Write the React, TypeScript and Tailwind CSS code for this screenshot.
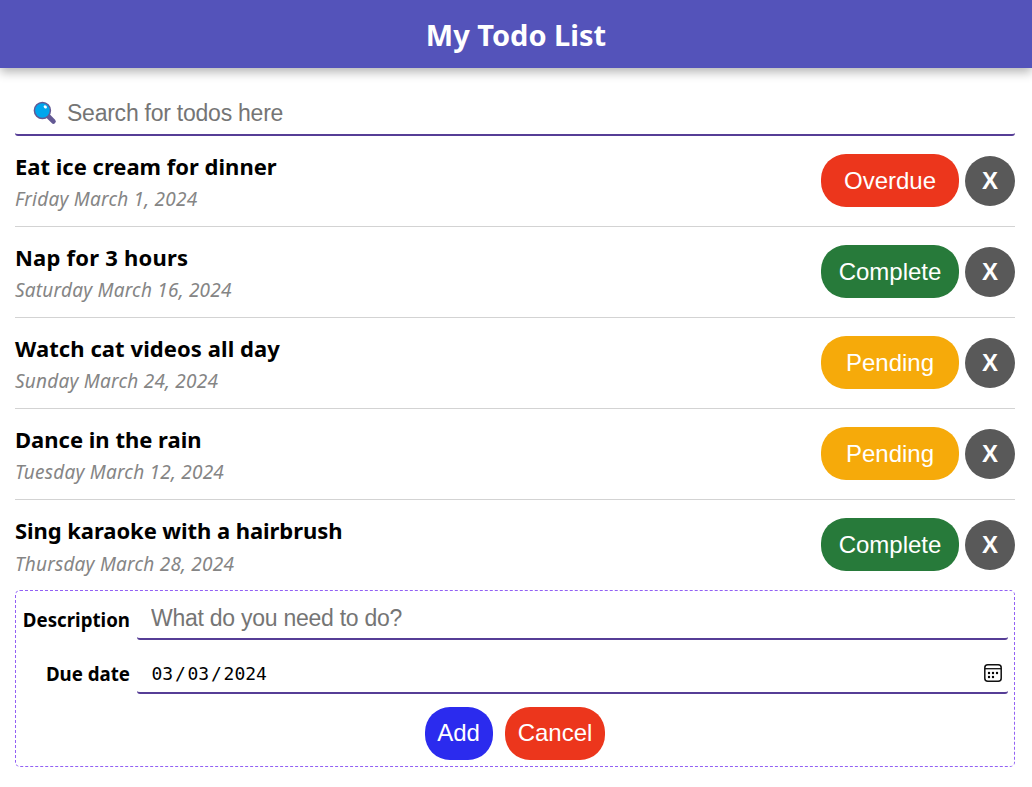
type Todo = {
  title: string;
  date: string;
  status: string;
  color: string;
  titleSpacing: string;
  dateSpacing: string;
};

const todos: Todo[] = [
  { title: 'Eat ice cream for dinner', date: 'Friday March 1, 2024', status: 'Overdue', color: 'bg-[#ec361c]', titleSpacing: '', dateSpacing: 'pt-1 tracking-[0.23px]' },
  { title: 'Nap for 3 hours', date: 'Saturday March 16, 2024', status: 'Complete', color: 'bg-[#277a3a]', titleSpacing: 'tracking-[0.22px]', dateSpacing: 'pt-1 tracking-[0.22px]' },
  { title: 'Watch cat videos all day', date: 'Sunday March 24, 2024', status: 'Pending', color: 'bg-[#f6aa0a]', titleSpacing: 'tracking-[0.08px]', dateSpacing: 'pt-1 tracking-[0.23px]' },
  { title: 'Dance in the rain', date: 'Tuesday March 12, 2024', status: 'Pending', color: 'bg-[#f6aa0a]', titleSpacing: '', dateSpacing: 'pt-1 tracking-[0.23px]' },
  { title: 'Sing karaoke with a hairbrush', date: 'Thursday March 28, 2024', status: 'Complete', color: 'bg-[#277a3a]', titleSpacing: 'tracking-[-0.07px]', dateSpacing: 'pt-[5px] tracking-[0.22px]' },
];

function SearchIcon() {
  return (
    <svg className="mt-0.5 h-6 w-6 shrink-0" viewBox="0 0 24 24">
      <path d="M15.5 15.5 L20.4 20.4" stroke="#635994" strokeWidth="4.8" strokeLinecap="round" />
      <circle cx="9.4" cy="9.5" r="8" fill="#00a6ed" stroke="#635994" strokeWidth="1.5" />
      <ellipse cx="12.3" cy="5.9" rx="1.8" ry="1.4" transform="rotate(40 12.3 5.9)" fill="#fff" />
    </svg>
  );
}

function CalendarIcon() {
  return (
    <svg className="mt-0.5 h-[18px] w-[18px]" viewBox="0 0 18 18" fill="none">
      <rect x="0.8" y="0.8" width="16.4" height="16.4" rx="3" stroke="#111" strokeWidth="1.5" />
      <path d="M1 4.7H17" stroke="#111" strokeWidth="1.3" />
      <g fill="#000">
        <circle cx="5" cy="9" r="1.2" />
        <circle cx="9" cy="9" r="1.2" />
        <circle cx="13" cy="9" r="1.2" />
        <circle cx="5" cy="13" r="1.2" />
        <circle cx="9" cy="13" r="1.2" />
      </g>
    </svg>
  );
}

function TodoRow({ todo, last }: { todo: Todo; last: boolean }) {
  return (
    <li className={last ? 'flex h-[90px] justify-between' : 'flex h-[91px] justify-between border-b border-[#d3d3d3]'}>
      <div className="pt-[15px]">
        <h2 className={`text-[22px] leading-[30px] font-bold whitespace-nowrap text-black ${todo.titleSpacing}`}>{todo.title}</h2>
        <p className={`text-[19px] leading-[28px] whitespace-nowrap text-[#858585] italic ${todo.dateSpacing}`}>{todo.date}</p>
      </div>
      <div className="flex gap-1.5 pt-[18px] font-['Liberation_Sans',Arial,sans-serif]">
        <button className={`h-[53px] w-[138px] rounded-[25px] text-2xl text-white ${todo.color}`}>{todo.status}</button>
        <button className="mt-0.5 h-[50px] w-[50px] rounded-full bg-[#595959] text-2xl font-bold text-white">X</button>
      </div>
    </li>
  );
}

export default function App() {
  return (
    <div className="h-[787px] overflow-hidden bg-white font-['Noto_Sans',sans-serif]">
      <header className="flex h-[68px] items-center justify-center bg-[#5453ba] pt-0.5 shadow-[0_4px_10px_rgba(0,0,0,0.3)]">
        <h1 className="text-[29px] leading-10 font-bold text-white">My Todo List</h1>
      </header>
      <main className="pt-[22px] pr-[17px] pl-[15px]">
        <div className="flex h-[46px] items-center gap-2.5 rounded-[3px] border-b-2 border-[#563d96] pl-[18px]">
          <SearchIcon />
          <input
            className="min-w-0 flex-1 pt-0.5 font-['Liberation_Sans',Arial,sans-serif] text-[23px] tracking-[-0.24px] outline-none placeholder:text-[#757575]"
            placeholder="Search for todos here"
          />
        </div>
        <ul>
          {todos.map((t, i) => (
            <TodoRow key={t.title} todo={t} last={i === todos.length - 1} />
          ))}
        </ul>
        <form className="h-[177px] rounded-[5px] border border-dashed border-[#9261f5] pt-[5px] pr-1.5">
          <div className="flex h-[44px]">
            <label className="w-[114px] pt-2.5 text-right text-[18.7px] leading-7 font-bold text-black">Description</label>
            <input
              className="ml-[7px] min-w-0 flex-1 rounded-[3px] border-b-2 border-[#563d96] pt-0.5 pl-[14px] font-['Liberation_Sans',Arial,sans-serif] text-[23px] tracking-[-0.26px] outline-none placeholder:text-[#757575]"
              placeholder="What do you need to do?"
            />
          </div>
          <div className="mt-[10px] flex h-[44px]">
            <label className="w-[114px] pt-2.5 text-right text-[18.7px] leading-7 font-bold text-black">Due date</label>
            <div className="ml-[7px] flex flex-1 items-center justify-between rounded-[3px] border-b-2 border-[#563d96] pt-0.5 pr-1.5 pl-[14.5px] font-['DejaVu_Sans_Mono',monospace] text-[18px] text-black">
              <div className="flex pt-0.5">
                <span>03</span>
                <span className="px-[1.75px]">/</span>
                <span>03</span>
                <span className="px-[1.75px]">/</span>
                <span>2024</span>
              </div>
              <CalendarIcon />
            </div>
          </div>
          <div className="mt-[13px] flex justify-center gap-3 pl-1.5 font-['Liberation_Sans',Arial,sans-serif] text-2xl text-white">
            <button type="button" className="h-[53px] w-[68px] rounded-[25px] bg-[#2b2bee] pr-px pb-0.5">Add</button>
            <button type="button" className="h-[53px] w-[100px] rounded-[25px] bg-[#ec361c] pb-0.5">Cancel</button>
          </div>
        </form>
      </main>
    </div>
  );
}
